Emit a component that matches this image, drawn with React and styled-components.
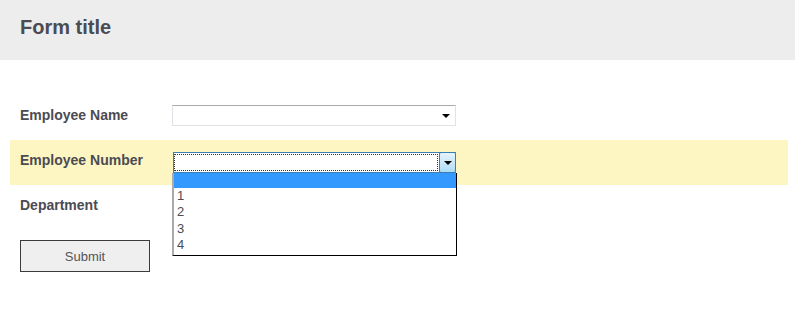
import React from 'react'
import styled, { createGlobalStyle } from 'styled-components'

const GlobalStyle = createGlobalStyle`
  html, body {
    margin: 0;
    padding: 0;
    background: #fff;
    font-family: "Liberation Sans", Arial, sans-serif;
  }
`

const Header = styled.div`
  height: 60px;
  background: #ededed;
  padding: 15px 20px 0;
  box-sizing: border-box;
  h1 {
    margin: 0;
    font-size: 20px;
    font-weight: bold;
    color: #4b4b53;
    line-height: 24px;
  }
`

const Form = styled.form`
  padding: 35px 7px 0 10px;
`

const Row = styled.div`
  height: 45px;
  display: flex;
  align-items: center;
  padding-left: 10px;
  background: ${p => (p.active ? '#fdf6c3' : 'transparent')};
`

const Label = styled.label`
  width: 152px;
  flex: none;
  font-size: 14px;
  font-weight: bold;
  color: #4b4b53;
  margin-top: -6px;
`

// fake select, the native one can't be shown open in a screenshot
const SelectBox = styled.div`
  position: relative;
  display: flex;
  align-items: center;
  justify-content: flex-end;
  width: 284px;
  height: 21px;
  box-sizing: border-box;
  background: #fff;
  border: 1px solid #dfe3e8;
  border-top-color: #ababab;
  margin-top: -4px;
  ${p => p.open && `
    align-items: stretch;
    border: 1px solid #3c7fb1;
    border-right: none;
    margin: -1px 0 0 1px;
    width: 283px;
  `}
`

const FocusRing = styled.div`
  flex: 1;
  margin: 1px 1px 1px 0;
  border: 1px dotted #333;
`

const Arrow = styled.span`
  width: 0;
  height: 0;
  margin: 1px 5px 0 0;
  border-left: 4px solid transparent;
  border-right: 4px solid transparent;
  border-top: 4px solid #000;
`

const ArrowButton = styled.div`
  display: flex;
  align-items: center;
  justify-content: center;
  width: 17px;
  margin: -1px 0;
  box-sizing: border-box;
  border: 1px solid #3c7fb1;
  border-radius: 2px;
  background: linear-gradient(#e5f4fc, #aedcf5);
  ${Arrow} {
    margin: 1px 0 0;
  }
`

const List = styled.ul`
  position: absolute;
  left: -2px;
  top: 20px;
  width: 285px;
  box-sizing: border-box;
  margin: 0;
  padding: 0 0 1px;
  list-style: none;
  background: #fff;
  border-left: 2px solid #aaa;
  border-right: 1px solid #000;
  border-bottom: 1px solid #000;
  z-index: 2;
`

const Option = styled.li`
  height: ${p => (p.selected ? '15px' : '16.5px')};
  line-height: 16px;
  padding-left: 3px;
  font-size: 13px;
  color: #4b4b53;
  background: ${p => (p.selected ? '#3399ff' : 'transparent')};
`

const Submit = styled.button`
  margin: 10px 0 0 10px;
  width: 130px;
  height: 32px;
  background: #efefef;
  border: 1px solid #3c3c3c;
  font-family: "Liberation Sans", Arial, sans-serif;
  font-size: 13px;
  color: #555;
`

const Select = ({ open, options }) => (
  <SelectBox open={open}>
    {open ? (
      <>
        <FocusRing />
        <ArrowButton><Arrow /></ArrowButton>
        <List>
          {options.map((o, i) => (
            <Option key={i} selected={o === ''}>{o}</Option>
          ))}
        </List>
      </>
    ) : (
      <Arrow />
    )}
  </SelectBox>
)

export default function App() {
  return (
    <>
      <GlobalStyle />
      <Header>
        <h1>Form title</h1>
      </Header>
      <Form onSubmit={e => e.preventDefault()}>
        <Row>
          <Label>Employee Name</Label>
          <Select />
        </Row>
        <Row active>
          <Label>Employee Number</Label>
          <Select open options={['', '1', '2', '3', '4']} />
        </Row>
        <Row>
          <Label>Department</Label>
        </Row>
        <Submit type="submit">Submit</Submit>
      </Form>
    </>
  )
}
